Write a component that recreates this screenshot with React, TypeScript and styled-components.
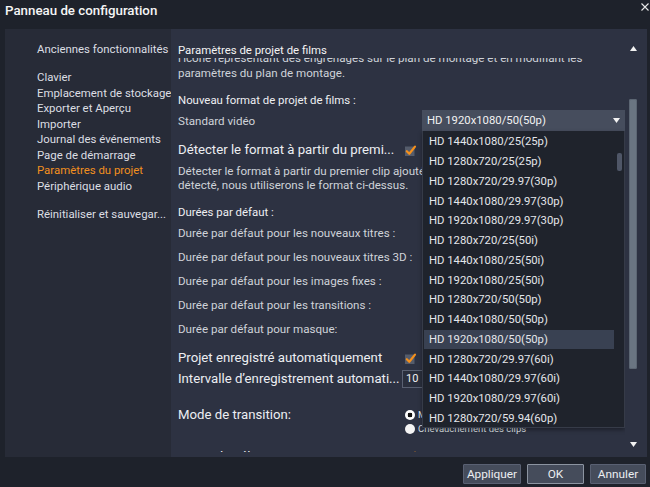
import React from 'react';
import styled, { createGlobalStyle } from 'styled-components';

const GlobalStyle = createGlobalStyle`
  html, body { margin: 0; padding: 0; background: #1e222b; }
  body { font-family: Roboto, "Liberation Sans", sans-serif; -webkit-font-smoothing: antialiased; }
  * { box-sizing: border-box; }
`;

const Window = styled.div`
  width: 650px;
  height: 487px;
  display: flex;
  flex-direction: column;
  background: #1e222b;
  color: #d3d6dd;
  overflow: hidden;
`;

const TitleBar = styled.div`
  height: 29px;
  flex: none;
  display: flex;
  align-items: flex-start;
  justify-content: space-between;
  padding: 2px 1px 0 5px;
`;

const Title = styled.div`
  font-size: 13.3px;
  font-weight: 500;
  line-height: 18px;
  color: #f5f5f5;
`;

const CloseIcon = styled.svg`
  width: 8px;
  height: 8px;
  margin-top: 1px;
`;

const Body = styled.div`
  flex: 1;
  min-height: 0;
  display: flex;
  padding: 0 3px 0 5px;
`;

const Sidebar = styled.nav`
  width: 166px;
  flex: none;
  background: #272b37;
  padding: 13px 0 0 32px;
  display: flex;
  flex-direction: column;
`;

const NavGroup = styled.div`
  display: flex;
  flex-direction: column;
  margin-bottom: 12.5px;
`;

const NavItem = styled.div<{ $active?: boolean }>`
  font-size: 11.4px;
  line-height: 15.5px;
  white-space: nowrap;
  color: ${(p) => (p.$active ? '#f2901f' : '#dcdee3')};
`;

const Main = styled.section`
  flex: 1;
  min-width: 0;
  display: flex;
  background: #2d3242;
`;

const Content = styled.div`
  flex: 1;
  min-width: 0;
  display: flex;
  flex-direction: column;
  padding: 0 0 5px 7px;
`;

const Header = styled.div`
  flex: none;
  padding-top: 13px;
  font-size: 11.4px;
  line-height: 16px;
  color: #f4f4f4;
`;

const ScrollArea = styled.div`
  flex: 1;
  min-height: 0;
  overflow: hidden;
  display: flex;
  flex-direction: column;
`;

const Paragraph = styled.div<{ $mt: number; $lh: number }>`
  margin-top: ${(p) => p.$mt}px;
  font-size: 11.6px;
  line-height: ${(p) => p.$lh}px;
  color: #cfd2d9;
  white-space: nowrap;
`;

const SectionTitle = styled.div<{ $mt: number }>`
  margin-top: ${(p) => p.$mt}px;
  font-size: 11.4px;
  line-height: 16px;
  color: #eeeff2;
`;

const Row = styled.div<{ $mt: number; $h: number; $top?: boolean }>`
  margin-top: ${(p) => p.$mt}px;
  height: ${(p) => p.$h}px;
  flex: none;
  display: flex;
  align-items: ${(p) => (p.$top ? 'flex-start' : 'center')};
`;

const Label = styled.div<{ $w: number; $big?: boolean }>`
  width: ${(p) => p.$w}px;
  flex: none;
  white-space: nowrap;
  line-height: 18px;
  font-size: ${(p) => (p.$big ? '13.2px' : '11.6px')};
  color: ${(p) => (p.$big ? '#eceef2' : '#cfd2d9')};
`;

const SelectWrap = styled.div`
  position: relative;
  width: 203px;
  height: 21px;
  flex: none;
`;

const SelectBox = styled.div`
  height: 100%;
  display: flex;
  align-items: center;
  justify-content: space-between;
  padding: 0 5px 0 5px;
  background: #464d5d;
  color: #f2f2f2;
  font-size: 11.3px;
`;

const Arrow = styled.svg`
  width: 7px;
  height: 5px;
`;

const List = styled.div`
  position: absolute;
  top: 100%;
  left: 0;
  width: 203px;
  height: 297px;
  display: flex;
  background: #1f232c;
  border: 1px solid #363b48;
  border-top: none;
  overflow: hidden;
  z-index: 5;
  box-shadow: 0 2px 4px rgba(0, 0, 0, 0.35);
`;

const ListItems = styled.div`
  width: 191px;
  flex: none;
  padding: 1px 0 0 1px;
  display: flex;
  flex-direction: column;
`;

const ListItem = styled.div<{ $selected?: boolean }>`
  height: 19.75px;
  flex: none;
  display: flex;
  align-items: center;
  padding-left: 5px;
  font-size: 11.3px;
  white-space: nowrap;
  color: #e4e6ea;
  background: ${(p) => (p.$selected ? '#394152' : 'transparent')};
`;

const MiniTrack = styled.div`
  flex: 1;
  padding: 22px 0 0 0;
  display: flex;
  justify-content: center;
`;

const MiniThumb = styled.div`
  width: 5px;
  height: 18px;
  border-radius: 2px;
  background: #4f5667;
`;

const Check = styled.svg`
  width: 13px;
  height: 13px;
  flex: none;
`;

const NumberInput = styled.div`
  width: 30px;
  height: 18px;
  flex: none;
  display: flex;
  align-items: center;
  padding-left: 3px;
  border: 1px solid #5a6172;
  background: #2a2f3d;
  font-size: 11px;
  color: #f0f0f0;
`;

const RadioGroup = styled.div`
  display: flex;
  flex-direction: column;
  padding-top: 2px;
`;

const RadioRow = styled.div`
  display: flex;
  align-items: center;
  gap: 3px;
  height: 14px;
  font-size: 9.5px;
  color: #dfe1e6;
  white-space: nowrap;
`;

const Radio = styled.span<{ $on?: boolean }>`
  width: 10px;
  height: 10px;
  border-radius: 50%;
  flex: none;
  background: ${(p) => (p.$on ? 'radial-gradient(circle, #111 0 2.2px, #fff 2.6px)' : '#f4f4f4')};
`;

const ScrollBar = styled.div`
  width: 16px;
  flex: none;
  margin-right: 6px;
  display: flex;
  flex-direction: column;
  align-items: center;
  padding: 17px 0 10px 0;
`;

const Thumb = styled.div`
  width: 8px;
  height: 270px;
  margin-top: 48px;
  border-radius: 2px;
  background: #6a7582;
  box-shadow: inset 0 0 0 1px #5c6673;
`;

const Spacer = styled.div`
  flex: 1;
`;

const Footer = styled.div`
  height: 30px;
  flex: none;
  display: flex;
  justify-content: flex-end;
  align-items: flex-start;
  gap: 6px;
  padding: 7px 4px 0 0;
`;

const Button = styled.button<{ $w: number; $focus?: boolean }>`
  width: ${(p) => p.$w}px;
  height: 20px;
  padding: 0;
  font-family: inherit;
  font-size: 11.8px;
  color: #eceef1;
  background: #454c5b;
  border: 1px solid ${(p) => (p.$focus ? '#8c94a1' : '#596072')};
  border-radius: 1px;
`;

const formats = [
  'HD 1440x1080/25(25p)',
  'HD 1280x720/25(25p)',
  'HD 1280x720/29.97(30p)',
  'HD 1440x1080/29.97(30p)',
  'HD 1920x1080/29.97(30p)',
  'HD 1280x720/25(50i)',
  'HD 1440x1080/25(50i)',
  'HD 1920x1080/25(50i)',
  'HD 1280x720/50(50p)',
  'HD 1440x1080/50(50p)',
  'HD 1920x1080/50(50p)',
  'HD 1280x720/29.97(60i)',
  'HD 1440x1080/29.97(60i)',
  'HD 1920x1080/29.97(60i)',
  'HD 1280x720/59.94(60p)',
];

const durations = [
  'Durée par défaut pour les nouveaux titres :',
  'Durée par défaut pour les nouveaux titres 3D :',
  'Durée par défaut pour les images fixes :',
  'Durée par défaut pour les transitions :',
  'Durée par défaut pour masque:',
];

const CheckMark = () => (
  <Check viewBox="0 0 13 13">
    <rect x="1" y="2.5" width="9.5" height="9.5" fill="#555c6b" />
    <path d="M2.8 7.2 L5.3 9.8 L11 2.6" fill="none" stroke="#f5901c" strokeWidth="2.2" strokeLinecap="round" strokeLinejoin="round" />
  </Check>
);

const TriUp = () => (
  <Arrow viewBox="0 0 7 5">
    <path d="M0 5 L3.5 0 L7 5 Z" fill="#f2f2f2" />
  </Arrow>
);

const TriDown = () => (
  <Arrow viewBox="0 0 7 5">
    <path d="M0 0 L7 0 L3.5 5 Z" fill="#f2f2f2" />
  </Arrow>
);

export default function App() {
  return (
    <>
      <GlobalStyle />
      <Window>
        <TitleBar>
          <Title>Panneau de configuration</Title>
          <CloseIcon viewBox="0 0 8 8">
            <path d="M0.5 0.5 L7.5 7.5 M7.5 0.5 L0.5 7.5" stroke="#e8e8e8" strokeWidth="1.1" />
          </CloseIcon>
        </TitleBar>
        <Body>
          <Sidebar>
            <NavGroup>
              <NavItem>Anciennes fonctionnalités</NavItem>
            </NavGroup>
            <NavGroup>
              <NavItem>Clavier</NavItem>
              <NavItem>Emplacement de stockage</NavItem>
              <NavItem>Exporter et Aperçu</NavItem>
              <NavItem>Importer</NavItem>
              <NavItem>Journal des événements</NavItem>
              <NavItem>Page de démarrage</NavItem>
              <NavItem $active>Paramètres du projet</NavItem>
              <NavItem>Périphérique audio</NavItem>
            </NavGroup>
            <NavGroup>
              <NavItem>Réinitialiser et sauvegar...</NavItem>
            </NavGroup>
          </Sidebar>
          <Main>
            <Content>
              <Header>Paramètres de projet de films</Header>
              <ScrollArea>
                <Paragraph $mt={-7.5} $lh={15}>
                  <div>l’icône représentant des engrenages sur le plan de montage et en modifiant les</div>
                  <div>paramètres du plan de montage.</div>
                </Paragraph>
                <SectionTitle $mt={11.5}>Nouveau format de projet de films :</SectionTitle>
                <Row $mt={2} $h={21}>
                  <Label $w={244}>Standard vidéo</Label>
                  <SelectWrap>
                    <SelectBox>
                      <span>HD 1920x1080/50(50p)</span>
                      <TriDown />
                    </SelectBox>
                    <List>
                      <ListItems>
                        {formats.map((f, i) => (
                          <ListItem key={f} $selected={i === 10}>
                            {f}
                          </ListItem>
                        ))}
                      </ListItems>
                      <MiniTrack>
                        <MiniThumb />
                      </MiniTrack>
                    </List>
                  </SelectWrap>
                </Row>
                <Row $mt={10} $h={18}>
                  <Label $w={226} $big>
                    Détecter le format à partir du premi...
                  </Label>
                  <CheckMark />
                </Row>
                <Paragraph $mt={4.5} $lh={14.5}>
                  <div>Détecter le format à partir du premier clip ajouté au plan de montage. Si aucun format n’est</div>
                  <div>détecté, nous utiliserons le format ci-dessus.</div>
                </Paragraph>
                <SectionTitle $mt={11}>Durées par défaut :</SectionTitle>
                {durations.map((d, i) => (
                  <Row key={d} $mt={i === 0 ? 1.6 : 0} $h={24}>
                    <Label $w={244}>{d}</Label>
                  </Row>
                ))}
                <Row $mt={8} $h={18}>
                  <Label $w={226} $big>
                    Projet enregistré automatiquement
                  </Label>
                  <CheckMark />
                </Row>
                <Row $mt={2.7} $h={18}>
                  <Label $w={224} $big>
                    Intervalle d’enregistrement automati...
                  </Label>
                  <NumberInput>10</NumberInput>
                </Row>
                <Row $mt={18} $h={32} $top>
                  <Label $w={227} $big>
                    Mode de transition:
                  </Label>
                  <RadioGroup>
                    <RadioRow>
                      <Radio $on />
                      Mélange des clips
                    </RadioRow>
                    <RadioRow>
                      <Radio />
                      Chevauchement des clips
                    </RadioRow>
                  </RadioGroup>
                </Row>
                <Row $mt={10} $h={18}>
                  <Label $w={226} $big>
                    Zoom de sélection
                  </Label>
                  <CheckMark />
                </Row>
              </ScrollArea>
            </Content>
            <ScrollBar>
              <TriUp />
              <Thumb />
              <Spacer />
              <TriDown />
            </ScrollBar>
          </Main>
        </Body>
        <Footer>
          <Button $w={58}>Appliquer</Button>
          <Button $w={57} $focus>
            OK
          </Button>
          <Button $w={56}>Annuler</Button>
        </Footer>
      </Window>
    </>
  );
}
